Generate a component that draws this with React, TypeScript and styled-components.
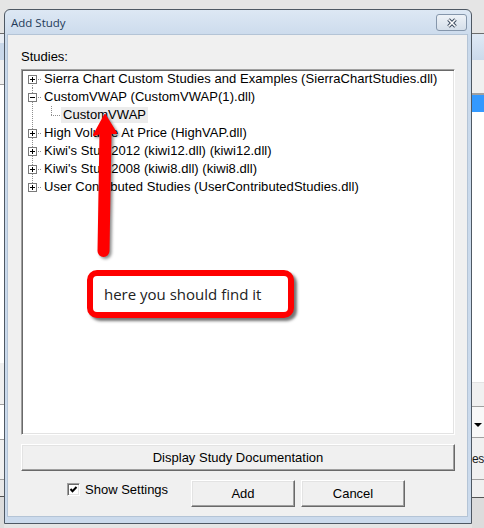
import React from 'react';
import styled, { createGlobalStyle } from 'styled-components';

const GlobalStyle = createGlobalStyle`
  html, body {
    margin: 0;
    padding: 0;
    background: #e5e5e5;
  }
`;

const Screen = styled.div`
  width: 484px;
  height: 528px;
  overflow: hidden;
  display: flex;
  background: #e5e5e5;
  font-family: "Liberation Sans", Arial, sans-serif;
  font-size: 13px;
  color: #000;
`;

/* windows lying behind the dialog, seen only at its edges */
const Strip = styled.div<{ $width: number }>`
  width: ${p => p.$width}px;
  flex: none;
  display: flex;
  flex-direction: column;
  overflow: hidden;
`;

const Band = styled.div<{ $h: number; $bg: string; $line?: string }>`
  height: ${p => p.$h}px;
  flex: none;
  box-sizing: border-box;
  background: ${p => p.$bg};
  border-bottom: ${p => (p.$line ? `1px solid ${p.$line}` : 'none')};
  display: flex;
  align-items: center;
  white-space: nowrap;
  font-size: 12px;
  letter-spacing: -0.5px;
  color: #1a1a1a;
`;

const Caret = styled.span`
  margin: 6px 0 0 2px;
  width: 0;
  height: 0;
  border-left: 4px solid transparent;
  border-right: 4px solid transparent;
  border-top: 4px solid #000;
`;

const Dialog = styled.div`
  margin-top: 9px;
  width: 468px;
  height: 515px;
  flex: none;
  box-sizing: border-box;
  border: 1px solid #4e5863;
  border-radius: 6px 6px 0 0;
  background: linear-gradient(#dde8f4, #c9d9eb 30px, #cbdaec);
  padding: 0 3px 6px 2px;
  display: flex;
  flex-direction: column;
`;

const TitleBar = styled.div`
  height: 24px;
  flex: none;
  display: flex;
  align-items: center;
  padding: 0 1px 0 4px;
`;

const Title = styled.span`
  flex: 1;
  font-family: "Open Sans", "Noto Sans", sans-serif;
  font-size: 11.5px;
  color: #233a58;
`;

const CloseButton = styled.div`
  width: 31px;
  height: 17px;
  box-sizing: border-box;
  border: 1px solid #8596ab;
  border-radius: 3px;
  background: linear-gradient(#eef2f7, #d5dfea);
  display: flex;
  align-items: center;
  justify-content: center;
  margin-top: 1px;
`;

const Client = styled.div`
  flex: 1;
  display: flex;
  flex-direction: column;
  background: #f0f0f0;
  border: 1px solid #b4c4d6;
  padding: 14px 12px 8px 13px;
`;

const FieldLabel = styled.div`
  height: 16px;
  line-height: 16px;
`;

const Tree = styled.div`
  position: relative;
  margin-top: 4px;
  height: 366px;
  box-sizing: border-box;
  background: #fff;
  border-style: solid;
  border-width: 1px;
  border-color: #a0a0a0 #fff #fff #a0a0a0;
  box-shadow: inset 1px 1px 0 #696969, inset -1px -1px 0 #e3e3e3;
`;

const Row = styled.div`
  height: 18px;
  display: flex;
  align-items: center;
  padding-left: 1px;
`;

const Gutter = styled.span<{ $up?: boolean; $down?: boolean; $branch?: boolean }>`
  position: relative;
  width: 19px;
  flex: none;
  align-self: stretch;
  display: flex;
  align-items: center;
  justify-content: center;

  &::before {
    content: '';
    position: absolute;
    left: 9px;
    width: 1px;
    top: ${p => (p.$up ? '0' : '9px')};
    bottom: ${p => (p.$down ? '0' : '9px')};
    background: repeating-linear-gradient(to bottom, #8e8e8e 0 1px, transparent 1px 2px);
  }

  &::after {
    content: '';
    position: absolute;
    top: 9px;
    left: 9px;
    right: 0;
    height: 1px;
    display: ${p => (p.$branch ? 'block' : 'none')};
    background: repeating-linear-gradient(to right, #8e8e8e 0 1px, transparent 1px 2px);
  }
`;

const ExpanderBox = styled.svg`
  position: relative;
  z-index: 1;
  display: block;
`;

const NodeLabel = styled.span<{ $selected?: boolean }>`
  height: 16px;
  line-height: 16px;
  padding: 0 2px;
  white-space: nowrap;
  letter-spacing: 0.05px;
  background: ${p => (p.$selected ? '#ececec' : 'transparent')};
`;

const Arrow = styled.svg`
  position: absolute;
  left: 63px;
  top: 40px;
  filter: drop-shadow(2px 2px 1.5px rgba(0, 0, 0, 0.45));
`;

const Callout = styled.div`
  position: absolute;
  left: 65px;
  top: 200px;
  width: 207px;
  height: 48px;
  box-sizing: border-box;
  border: 6px solid #ff0000;
  border-radius: 10px;
  background: #fff;
  box-shadow: 3px 3px 3px rgba(0, 0, 0, 0.55);
  display: flex;
  align-items: center;
  padding-left: 11px;
  font-family: "Open Sans", "Noto Sans", sans-serif;
  font-size: 15px;
  color: #222;
  white-space: nowrap;
`;

const PushButton = styled.button<{ $width?: number }>`
  width: ${p => (p.$width ? `${p.$width}px` : '100%')};
  height: 27px;
  flex: none;
  box-sizing: border-box;
  margin: 0;
  padding: 0;
  font-family: "Liberation Sans", Arial, sans-serif;
  font-size: 13px;
  color: #000;
  background: #f0f0f0;
  border-style: solid;
  border-width: 1px;
  border-color: #fff #696969 #696969 #fff;
  box-shadow: inset -1px -1px 0 #a0a0a0, inset 1px 1px 0 #e3e3e3;
`;

const DocButton = styled(PushButton)`
  margin-top: 9px;
`;

const Footer = styled.div`
  margin-top: 9px;
  height: 27px;
  display: flex;
`;

const CheckField = styled.label`
  align-self: flex-start;
  margin: 3px 0 0 46px;
  display: flex;
  align-items: center;
  gap: 5px;
  height: 13px;
`;

const CheckBox = styled.span`
  width: 13px;
  height: 13px;
  box-sizing: border-box;
  background: #fff;
  border-style: solid;
  border-width: 1px;
  border-color: #a0a0a0 #fff #fff #a0a0a0;
  box-shadow: inset 1px 1px 0 #696969, inset -1px -1px 0 #e3e3e3;
  display: flex;
  align-items: center;
  justify-content: center;
`;

const ButtonGroup = styled.div`
  margin: 0 50px 0 auto;
  display: flex;
  gap: 6px;
`;

const Expander = ({ open }: { open?: boolean }) => (
  <ExpanderBox width="9" height="9" viewBox="0 0 9 9">
    <rect x="0.5" y="0.5" width="8" height="8" fill="#fff" stroke="#7a7a7a" />
    <path d="M2 4.5h5" stroke="#000" />
    {!open && <path d="M4.5 2v5" stroke="#000" />}
  </ExpanderBox>
);

type Study = { name: string; open?: boolean; children?: string[] };

const studies: Study[] = [
  { name: 'Sierra Chart Custom Studies and Examples (SierraChartStudies.dll)' },
  { name: 'CustomVWAP (CustomVWAP(1).dll)', open: true, children: ['CustomVWAP'] },
  { name: 'High Volume At Price (HighVAP.dll)' },
  { name: "Kiwi's Stuff 2012 (kiwi12.dll) (kiwi12.dll)" },
  { name: "Kiwi's Stuff 2008 (kiwi8.dll) (kiwi8.dll)" },
  { name: 'User Contributed Studies (UserContributedStudies.dll)' },
];

const leftBands = [
  { h: 34, bg: '#e5e5e5', line: '#6d6d6d' },
  { h: 9, bg: '#e9eef5' },
  { h: 17, bg: '#c9d8ea' },
  { h: 25, bg: '#f0f0f0', line: '#a0a0a0' },
  { h: 278, bg: '#fff' },
  { h: 42, bg: '#f0f0f0', line: '#a0a0a0' },
  { h: 35, bg: '#fff', line: '#a0a0a0' },
  { h: 40, bg: '#f0f0f0', line: '#a0a0a0' },
  { h: 17, bg: '#e8e8e8', line: '#555' },
  { h: 31, bg: '#dcdcdc' },
];

const App = () => {
  const last = studies.length - 1;

  return (
    <Screen>
      <GlobalStyle />

      <Strip $width={4}>
        {leftBands.map((b, i) => (
          <Band key={i} $h={b.h} $bg={b.bg} $line={b.line} />
        ))}
      </Strip>

      <Dialog>
        <TitleBar>
          <Title>Add Study</Title>
          <CloseButton>
            <svg width="12" height="10" viewBox="0 0 12 10">
              <path d="M2.5 1.5l7 7M9.5 1.5l-7 7" stroke="#3d4b5e" strokeWidth="3.6" />
              <path d="M2.5 1.5l7 7M9.5 1.5l-7 7" stroke="#fff" strokeWidth="1.6" />
            </svg>
          </CloseButton>
        </TitleBar>

        <Client>
          <FieldLabel>Studies:</FieldLabel>
          <Tree>
            {studies.map((s, i) => (
              <React.Fragment key={s.name}>
                <Row>
                  <Gutter $up={i > 0} $down={i < last} $branch>
                    <Expander open={s.open} />
                  </Gutter>
                  <NodeLabel>{s.name}</NodeLabel>
                </Row>
                {s.open &&
                  s.children?.map(c => (
                    <Row key={c}>
                      <Gutter $up $down={i < last} />
                      <Gutter $up $branch />
                      <NodeLabel $selected>{c}</NodeLabel>
                    </Row>
                  ))}
              </React.Fragment>
            ))}

            <Arrow width="40" height="155" viewBox="0 0 40 155">
              <path
                d="M20 5 L31 23 L25.5 23 L23.5 141 A5 5 0 0 1 13.5 141 L15.5 23 L9 25 Z"
                fill="#ff0000"
                stroke="#ff0000"
                strokeWidth="2"
                strokeLinejoin="round"
              />
            </Arrow>
            <Callout>here you should find it</Callout>
          </Tree>

          <DocButton>Display Study Documentation</DocButton>

          <Footer>
            <CheckField>
              <CheckBox>
                <svg width="9" height="9" viewBox="0 0 9 9">
                  <path d="M1.5 4 L3.5 6.2 L7.5 2" stroke="#000" strokeWidth="2" fill="none" />
                </svg>
              </CheckBox>
              Show Settings
            </CheckField>
            <ButtonGroup>
              <PushButton $width={104}>Add</PushButton>
              <PushButton $width={104}>Cancel</PushButton>
            </ButtonGroup>
          </Footer>
        </Client>
      </Dialog>

      <Strip $width={12}>
        <Band $h={34} $bg="#e5e5e5" $line="#6d6d6d" />
        <Band $h={26} $bg="linear-gradient(#dfe9f5, #cbdaeb)" />
        <Band $h={33} $bg="#f0f0f0" />
        <Band $h={2} $bg="#a0a0a0" />
        <Band $h={17} $bg="#3399ff" />
        <Band $h={271} $bg="#fff" $line="#e3e3e3" />
        <Band $h={24} $bg="#f0f0f0" $line="#a0a0a0" />
        <Band $h={31} $bg="#f8f8f8" $line="#a0a0a0">
          <Caret />
        </Band>
        <Band $h={42} $bg="#f0f0f0" $line="#a0a0a0">
          es
        </Band>
        <Band $h={18} $bg="#f0f0f0" $line="#555" />
        <Band $h={30} $bg="#dcdcdc" />
      </Strip>
    </Screen>
  );
};

export default App;
